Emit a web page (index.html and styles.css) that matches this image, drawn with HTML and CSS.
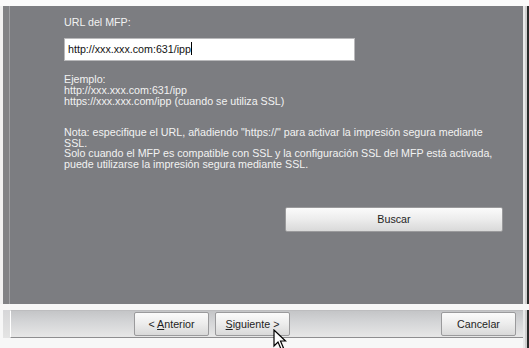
FILE: index.html
```html
<!DOCTYPE html>
<html lang="es">
<head>
<meta charset="utf-8">
<title>URL del MFP</title>
<link rel="stylesheet" href="styles.css">
</head>
<body>
<div class="screen">
  <div class="top-strip"></div>
  <div class="main-row">
    <div class="panel">
      <div class="panel-side"></div>
      <div class="panel-content">
        <div class="label">URL del MFP:</div>
        <div class="url-input">http://xxx.xxx.com:631/ipp<span class="caret"></span></div>
        <div class="example">
          <div>Ejemplo:</div>
          <div>http://xxx.xxx.com:631/ipp</div>
          <div>https://xxx.xxx.com/ipp (cuando se utiliza SSL)</div>
        </div>
        <div class="note">
          <div>Nota: especifique el URL, añadiendo "https://" para activar la impresión segura mediante</div>
          <div>SSL.</div>
          <div>Solo cuando el MFP es compatible con SSL y la configuración SSL del MFP está activada,</div>
          <div>puede utilizarse la impresión segura mediante SSL.</div>
        </div>
        <div class="search-row">
          <div class="btn btn-search">Buscar</div>
        </div>
      </div>
    </div>
    <div class="right-edge"></div>
  </div>
  <div class="footer">
    <div class="footer-side"></div>
    <div class="button-bar">
      <div class="btn btn-nav">&lt; <u>A</u>nterior</div>
      <div class="btn btn-nav"><u>S</u>iguiente &gt;</div>
      <div class="spacer"></div>
      <div class="btn btn-nav">Cancelar</div>
    </div>
    <div class="right-edge"></div>
  </div>
  <svg class="cursor" width="14" height="21" viewBox="0 0 14 21">
    <path d="M1 1 L1 17 L5 13 L8 20 L10.5 19 L7.5 12 L12.5 12 Z" fill="#ffffff" stroke="#000000" stroke-width="1.2" stroke-linejoin="miter"/>
  </svg>
</div>
</body>
</html>
```
FILE: styles.css
```css
html, body {
  margin: 0;
  padding: 0;
  background: #f3f3f3;
}
.screen {
  position: relative;
  width: 529px;
  height: 348px;
  overflow: hidden;
  font-family: "Liberation Sans", Arial, sans-serif;
  font-size: 10.7px;
  background: #f1f1f1;
}
.top-strip {
  height: 6px;
  background: #fafafa;
}
.main-row {
  display: flex;
  height: 298px;
  padding-left: 3px;
}
.panel {
  flex: 1;
  display: flex;
  background: #7c7d81;
}
.panel-side {
  width: 6px;
  background: #818285;
  border-right: 1px solid #a0a1a4;
}
.panel-content {
  flex: 1;
  padding: 10px 20px 0 54px;
  color: #f2f2f2;
  white-space: nowrap;
}
.right-edge {
  width: 6px;
  border-left: 2px solid #e9e9e9;
  border-right: 2px solid #2a2a2a;
  box-sizing: border-box;
  background: #cfcfcf;
}
.label {
  line-height: 13px;
}
.url-input {
  margin-top: 9px;
  width: 291px;
  height: 23px;
  box-sizing: border-box;
  background: #ffffff;
  border: 1px solid #b9b9bb;
  color: #111;
  padding-left: 3px;
  line-height: 21px;
}
.caret {
  display: inline-block;
  width: 1px;
  height: 13px;
  background: #000;
  vertical-align: -2px;
}
.example {
  margin-top: 13px;
  line-height: 11px;
}
.note {
  margin-top: 20px;
  line-height: 10.5px;
}
.search-row {
  display: flex;
  justify-content: flex-end;
  margin-top: 38px;
}
.btn {
  box-sizing: border-box;
  border: 1px solid #9a9a9c;
  border-radius: 2px;
  background: linear-gradient(#fbfbfb, #ececec 50%, #d9d9d9);
  color: #1e1e1e;
  text-align: center;
}
.btn-search {
  width: 218px;
  height: 25px;
  line-height: 23px;
}
.footer {
  display: flex;
  height: 44px;
  padding-top: 6px;
  padding-left: 3px;
  box-sizing: border-box;
  background: #f7f7f7;
}
.footer-side {
  width: 7px;
  height: 28px;
  background: linear-gradient(#d6d6d8, #e4e4e4);
}
.button-bar {
  flex: 1;
  display: flex;
  gap: 6px;
  align-items: center;
  height: 28px;
  box-sizing: border-box;
  border-left: 1px solid #ffffff;
  border-top: 1px solid #bdbdbf;
  border-bottom: 1px solid #8e8e90;
  padding: 0 7px 0 123px;
  background: linear-gradient(#c4c5c7, #d3d4d6 40%, #e7e7e7);
}
.btn-nav {
  width: 75px;
  height: 24px;
  line-height: 22px;
}
.spacer {
  flex: 1;
}
.cursor {
  position: absolute;
  left: 273px;
  top: 329px;
}
```
